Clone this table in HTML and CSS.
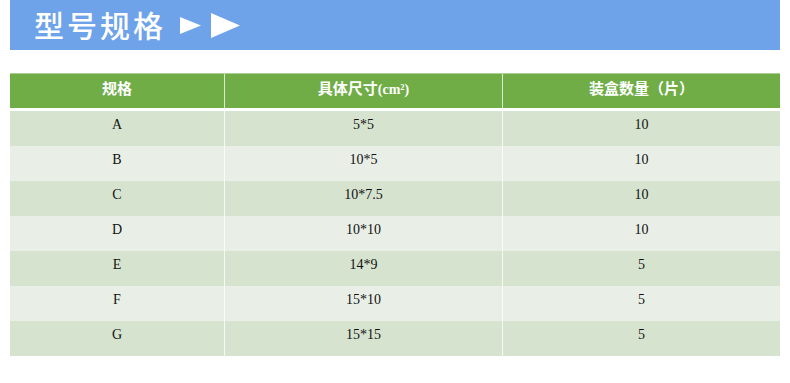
FILE: index.html
```html
<!DOCTYPE html>
<html lang="zh">
<head>
<meta charset="utf-8">
<link rel="stylesheet" href="styles.css">
</head>
<body>
<div class="page">
  <div class="banner">
    <span class="title">型号规格</span>
    <svg class="arrows" width="62" height="30" viewBox="0 0 62 30">
      <polygon points="1,7 22,15.5 1,24" fill="#fff"/>
      <polygon points="32,3 61,15.5 32,28" fill="#fff"/>
    </svg>
  </div>
  <div class="table">
    <div class="row head">
      <div class="cell">规格</div>
      <div class="cell">具体尺寸<span class="latin">(cm²)</span></div>
      <div class="cell">装盒数量（片）</div>
    </div>
    <div class="body">
      <div class="row dark"><div class="cell">A</div><div class="cell">5*5</div><div class="cell">10</div></div>
      <div class="row light"><div class="cell">B</div><div class="cell">10*5</div><div class="cell">10</div></div>
      <div class="row dark"><div class="cell">C</div><div class="cell">10*7.5</div><div class="cell">10</div></div>
      <div class="row light"><div class="cell">D</div><div class="cell">10*10</div><div class="cell">10</div></div>
      <div class="row dark"><div class="cell">E</div><div class="cell">14*9</div><div class="cell">5</div></div>
      <div class="row light"><div class="cell">F</div><div class="cell">15*10</div><div class="cell">5</div></div>
      <div class="row dark"><div class="cell">G</div><div class="cell">15*15</div><div class="cell">5</div></div>
    </div>
  </div>
</div>
</body>
</html>
```
FILE: styles.css
```css
html, body {
  margin: 0;
  padding: 0;
  background: #ffffff;
}
.page {
  padding: 0 10px;
  width: 770px;
}
.banner {
  height: 50px;
  background: #6ea2e9;
  display: flex;
  align-items: center;
  padding-left: 24px;
  box-sizing: border-box;
}
.title {
  font-family: "Noto Sans CJK SC", "Noto Sans", sans-serif;
  font-weight: 500;
  font-size: 30px;
  letter-spacing: 3px;
  color: #ffffff;
  line-height: 1;
  margin-top: -2px;
}
.arrows {
  margin-left: 13px;
}
.table {
  margin-top: 23px;
}
.row {
  display: grid;
  grid-template-columns: 214px 278px 278px;
  height: 35px;
}
.cell {
  text-align: center;
  box-sizing: border-box;
  border-left: 1px solid rgba(255,255,255,0.75);
}
.cell:first-child {
  border-left: none;
}
.head {
  background: #70ad47;
  height: 34px;
  border-top: 1px solid #a9cf91;
}
.head .cell {
  font-family: "Noto Sans CJK SC", "Noto Sans", sans-serif;
  font-weight: bold;
  font-size: 15px;
  color: #ffffff;
  padding-top: 4px;
  line-height: 20px;
}
.head .cell .latin {
  font-family: "Liberation Serif", serif;
  font-weight: bold;
  font-size: 14px;
}
.body {
  margin-top: 3px;
}
.body .cell {
  font-family: "Liberation Serif", "Times New Roman", serif;
  font-size: 14px;
  color: #111111;
  padding-top: 6px;
  line-height: 16px;
}
.dark {
  background: #d6e3cf;
}
.light {
  background: #e9efe7;
}
```
